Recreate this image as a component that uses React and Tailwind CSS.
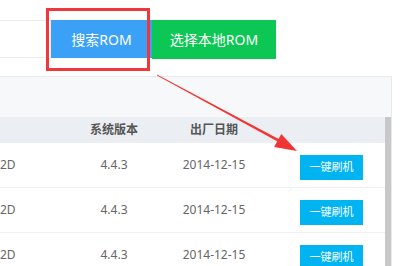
const rows = [
  { model: "2D", version: "4.4.3", date: "2014-12-15" },
  { model: "2D", version: "4.4.3", date: "2014-12-15" },
  { model: "2D", version: "4.4.3", date: "2014-12-15" },
];

export default function App() {
  return (
    <div
      className="relative w-[400px] h-[266px] overflow-hidden bg-white"
      style={{ fontFamily: '"Noto Sans", "Noto Sans CJK SC", sans-serif' }}
    >
      {/* toolbar */}
      <div className="flex pt-[20px]">
        <div className="w-[51px] h-[38px] border-y border-r border-[#e8eaed] bg-white" />
        <button className="w-[101px] h-[38px] bg-[#3ba1f6] text-white text-[14px] flex items-center justify-center">
          搜索ROM
        </button>
        <button className="w-[124px] h-[39px] bg-[#0cc753] text-white text-[14px] flex items-center justify-center">
          选择本地ROM
        </button>
      </div>

      {/* table panel */}
      <div className="mt-[17px] w-[392px] border-t border-r border-[#e6eaef] bg-[#f6f8fa]">
        <div className="h-[40px]" />
        <div className="flex">
          <div className="flex-1">
            <div className="flex h-[26px] items-center bg-[#ebeef2] text-[12px] font-semibold text-[#555]">
              <div className="w-[65px]" />
              <div className="w-[98px] text-center">系统版本</div>
              <div className="w-[102px] text-center">出厂日期</div>
              <div className="flex-1" />
            </div>
            <div className="bg-white">
              {rows.map((r, i) => (
                <div key={i} className="flex h-[45px] items-center border-b border-[#eef0f3] text-[12px] text-[#666]">
                  <div className="w-[65px] text-left">{r.model}</div>
                  <div className="w-[98px] text-center">{r.version}</div>
                  <div className="w-[102px] text-center">{r.date}</div>
                  <div className="flex-1 pl-[35px]">
                    <button className="mt-[4px] w-[63px] h-[25px] bg-[#00b4f1] text-white text-[11px] flex items-center justify-center">
                      一键刷机
                    </button>
                  </div>
                </div>
              ))}
            </div>
          </div>
          <div className="w-[6px] bg-[#c8c8c8]" />
        </div>
      </div>

      {/* annotation: red box */}
      <div className="absolute left-[46px] top-[8px] w-[104px] h-[63px] border-[3px] border-[#f0373b]" />

      {/* annotation: arrow */}
      <svg className="absolute left-0 top-0 pointer-events-none" width="400" height="266" viewBox="0 0 400 266">
        <polygon points="157,74.5 157,75.5 278.5,142 279.5,139.5" fill="#f23434" />
        <polygon points="297,151 274.1,147.1 281.3,133.9" fill="#f23434" />
      </svg>
    </div>
  );
}
